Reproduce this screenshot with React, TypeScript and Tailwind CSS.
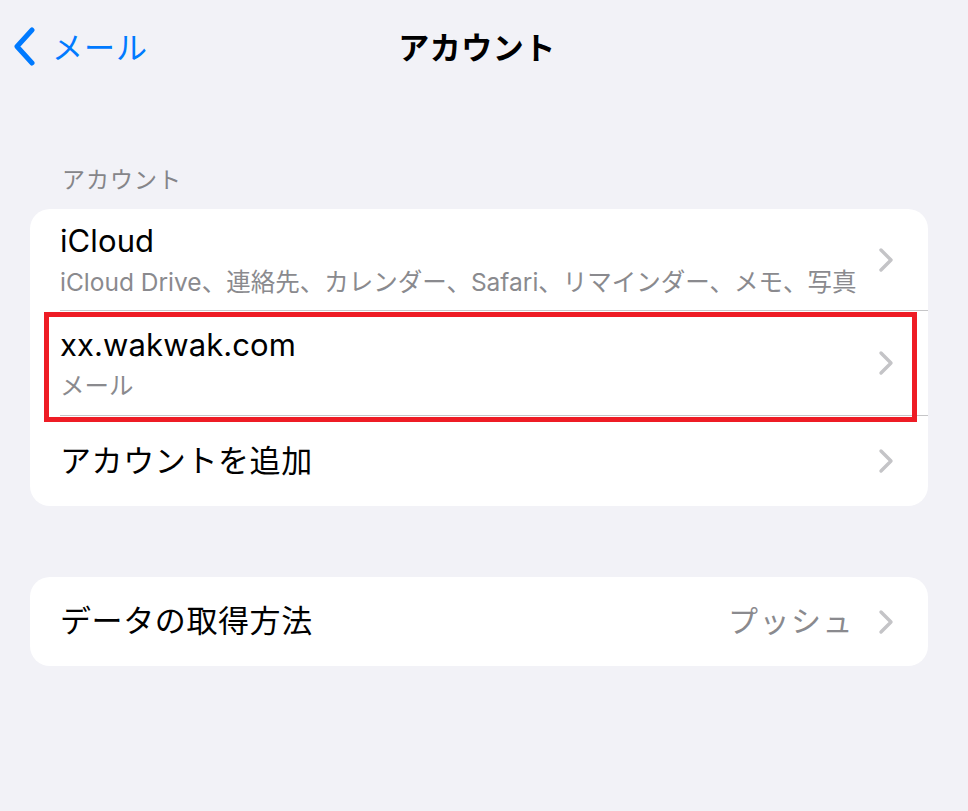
import { Fragment } from "react";

/* iOS Mail > アカウント settings screen */

const font = { fontFamily: 'Inter, "Noto Sans CJK JP", sans-serif' };

function Chevron() {
  return (
    <svg width="16" height="26" viewBox="0 0 16 26" className="shrink-0">
      <path d="M3 3 L13 13 L3 23" fill="none" stroke="#c4c4c7" strokeWidth="3.4" strokeLinecap="round" strokeLinejoin="round" />
    </svg>
  );
}

type Row = { title: string; sub?: string; h: string; jp?: boolean; last?: boolean };

const accountRows: Row[] = [
  { title: "iCloud", sub: "iCloud Drive、連絡先、カレンダー、Safari、リマインダー、メモ、写真", h: "h-[102px]" },
  { title: "xx.wakwak.com", sub: "メール", h: "h-[105px]" },
  { title: "アカウントを追加", h: "h-[90px]", jp: true, last: true },
];

export default function App() {
  return (
    <div className="min-h-screen w-full bg-[#f2f2f7] text-black" style={font}>
      {/* Nav bar */}
      <div className="grid h-[94px] grid-cols-[1fr_auto_1fr] items-center pr-[14px]">
        <div className="flex items-center gap-[15px] pl-[13px] text-[#007aff]">
          <svg width="24" height="40" viewBox="0 0 24 40">
            <path d="M19 3 L4 19.5 L19 36" fill="none" stroke="#007aff" strokeWidth="5" strokeLinecap="round" strokeLinejoin="round" />
          </svg>
          <span className="text-[31px] leading-none tracking-[1px]">メール</span>
        </div>
        <div className="text-[31px] font-bold leading-none tracking-[0.5px]">アカウント</div>
        <div />
      </div>

      {/* Section header */}
      <div className="mt-[70px] mb-[13px] pl-[62px] text-[23px] leading-[32px] text-[#858589] tracking-[1px]">アカウント</div>

      {/* Accounts card */}
      <div className="relative ml-[30px] mr-[40px]">
        <div className="overflow-hidden rounded-[20px] bg-white">
          {accountRows.map((r) => (
            <Fragment key={r.title}>
              <div className={`flex pl-[30px] ${r.h}`}>
                <div className={`flex flex-1 items-center pr-[34px] ${r.last ? "" : "border-b border-[#c6c6c8]"}`}>
                  <div className="flex-1">
                    <div className={`text-[31px] leading-[38px] ${r.jp ? "tracking-[0.6px]" : "tracking-[0.1px]"}`}>{r.title}</div>
                    {r.sub && <div className="mt-[7px] text-[24.5px] leading-[30px] text-[#8a8a8e]">{r.sub}</div>}
                  </div>
                  <Chevron />
                </div>
              </div>
            </Fragment>
          ))}
        </div>
        {/* highlight box */}
        <div className="pointer-events-none absolute left-[14px] top-[103px] h-[110px] w-[873px] border-[5px] border-[#ee1c25]" />
      </div>

      {/* Fetch card */}
      <div className="ml-[30px] mr-[40px] mt-[71px] flex h-[89px] items-center rounded-[20px] bg-white pl-[30px] pr-[34px]">
        <div className="flex-1 text-[31px] tracking-[0.6px]">データの取得方法</div>
        <span className="mr-[24px] text-[30px] text-[#8a8a8e] tracking-[1.5px]">プッシュ</span>
        <Chevron />
      </div>
    </div>
  );
}
